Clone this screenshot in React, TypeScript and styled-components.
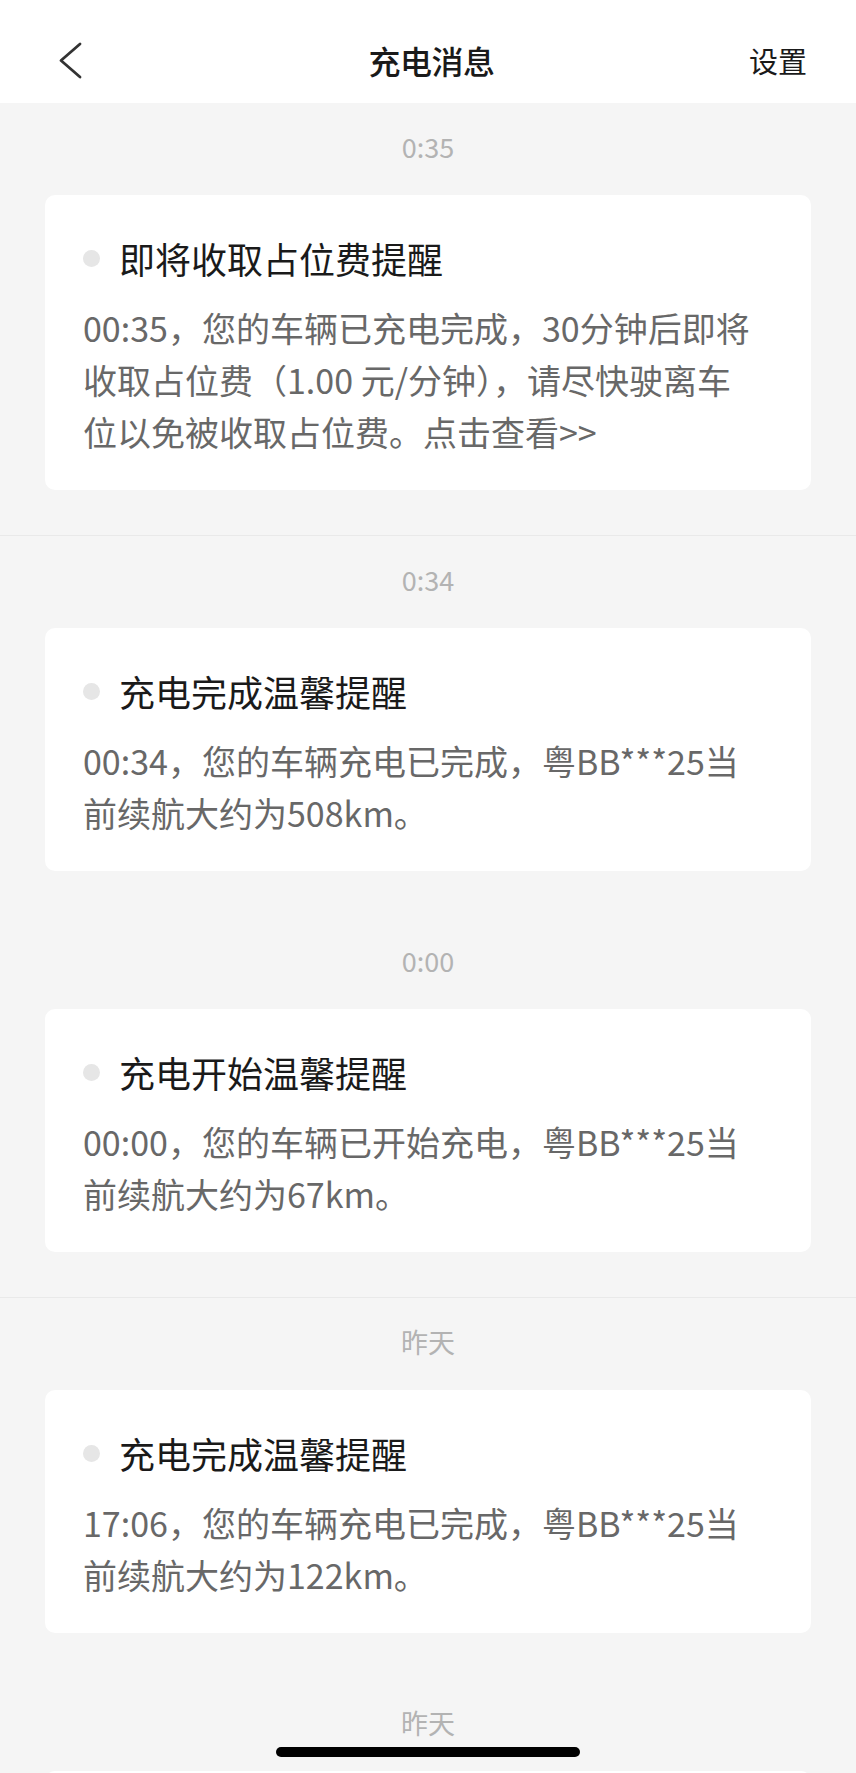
import React from "react";
import styled, { createGlobalStyle } from "styled-components";

const GlobalStyle = createGlobalStyle`
  * {
    box-sizing: border-box;
  }
  body {
    margin: 0;
    background-color: #f5f5f5;
    font-family: "Noto Sans CJK SC", "Noto Sans", sans-serif;
    -webkit-font-smoothing: antialiased;
  }
`;

const Page = styled.div`
  width: 856px;
  height: 1773px;
  overflow: hidden;
  background-color: #f5f5f5;
  position: relative;
`;

const Header = styled.header`
  height: 103px;
  padding: 16px 49px 0 56px;
  background-color: #fff;
  display: grid;
  grid-template-columns: 1fr auto 1fr;
  align-items: center;
`;

const BackButton = styled.button`
  justify-self: start;
  display: flex;
  padding: 0;
  border: none;
  background: none;
  cursor: pointer;
`;

const Title = styled.h1`
  margin: 0;
  font-size: 32px;
  font-weight: 500;
  color: #1a1a1a;
  letter-spacing: -0.5px;
`;

const Settings = styled.span`
  justify-self: end;
  font-size: 29px;
  color: #1a1a1a;
`;

const Group = styled.section<{ $divider?: boolean }>`
  padding: 20px 45px 45px 45px;
  border-bottom: 1px solid ${({ $divider }) => ($divider ? "#e9e9e9" : "transparent")};
`;

const Time = styled.div`
  height: 48px;
  line-height: 48px;
  margin-bottom: 24px;
  text-align: center;
  font-size: 27px;
  color: #b3b3b3;
`;

const Card = styled.article`
  background-color: #fff;
  border-radius: 10px;
  padding: 37px 53px 32px 38px;
`;

const CardHead = styled.div`
  display: flex;
  align-items: center;
  gap: 19px;
  height: 52px;
`;

const Dot = styled.span`
  width: 17px;
  height: 17px;
  border-radius: 50%;
  background-color: #e6e6e6;
  flex-shrink: 0;
`;

const CardTitle = styled.h2`
  margin: 0;
  font-size: 36px;
  font-weight: 400;
  line-height: 52px;
  color: #1a1a1a;
  white-space: nowrap;
`;

const CardText = styled.p`
  margin: 18px 0 0 0;
  font-size: 34px;
  line-height: 52px;
  color: #686868;
`;

const HomeBar = styled.div`
  position: fixed;
  left: 50%;
  bottom: 16px;
  width: 304px;
  height: 10px;
  margin-left: -152px;
  border-radius: 5px;
  background-color: #000;
`;

interface Message {
  time: string;
  title: string;
  text: string;
  divider?: boolean;
}

const messages: Message[] = [
  {
    time: "0:35",
    title: "即将收取占位费提醒",
    text: "00:35，您的车辆已充电完成，30分钟后即将收取占位费（1.00 元/分钟），请尽快驶离车位以免被收取占位费。点击查看>>",
    divider: true,
  },
  {
    time: "0:34",
    title: "充电完成温馨提醒",
    text: "00:34，您的车辆充电已完成，粤BB***25当前续航大约为508km。",
  },
  {
    time: "0:00",
    title: "充电开始温馨提醒",
    text: "00:00，您的车辆已开始充电，粤BB***25当前续航大约为67km。",
    divider: true,
  },
  {
    time: "昨天",
    title: "充电完成温馨提醒",
    text: "17:06，您的车辆充电已完成，粤BB***25当前续航大约为122km。",
  },
  {
    time: "昨天",
    title: "充电开始温馨提醒",
    text: "15:12，您的车辆已开始充电，粤BB***25当前续航大约为36km。",
  },
];

const BackIcon = () => (
  <svg width="28" height="40" viewBox="0 0 28 40" fill="none">
    <polyline
      points="24,4 5,20.5 24,37"
      stroke="#333"
      strokeWidth="2.8"
      strokeLinecap="round"
      strokeLinejoin="round"
    />
  </svg>
);

const App = () => {
  return (
    <Page>
      <GlobalStyle />
      <Header>
        <BackButton aria-label="返回">
          <BackIcon />
        </BackButton>
        <Title>充电消息</Title>
        <Settings>设置</Settings>
      </Header>
      {messages.map((msg, i) => (
        <Group key={i} $divider={msg.divider}>
          <Time>{msg.time}</Time>
          <Card>
            <CardHead>
              <Dot />
              <CardTitle>{msg.title}</CardTitle>
            </CardHead>
            <CardText>{msg.text}</CardText>
          </Card>
        </Group>
      ))}
      <HomeBar />
    </Page>
  );
};

export default App;
